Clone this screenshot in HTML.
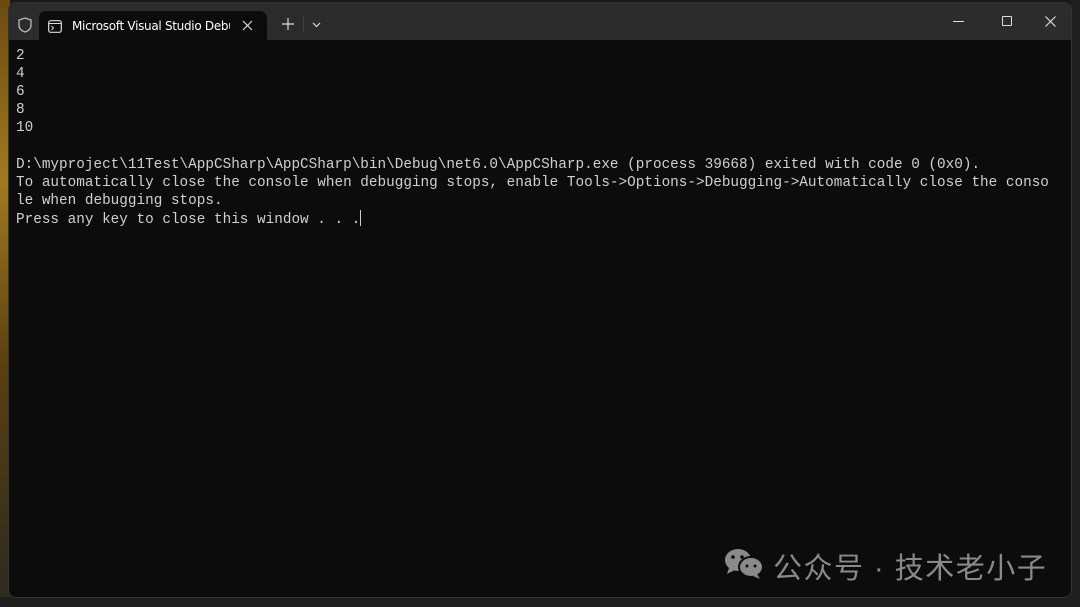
<!DOCTYPE html>
<html><head><meta charset="utf-8"><style>
html,body{margin:0;padding:0;width:1080px;height:607px;overflow:hidden;background:#1a1a14;}
.wp{position:absolute;left:0;top:0;width:10px;height:607px;background:linear-gradient(180deg,#6b4a12,#a07a20 30%,#5a4010 60%,#2a2a20);}
.ed{position:absolute;right:0;top:0;width:10px;height:607px;background:#1e1e1e;}
.bot{position:absolute;left:0;bottom:0;width:1080px;height:10px;background:#1e1e1e;}
.win{position:absolute;left:8px;top:2px;width:1064px;height:596px;background:#0c0c0c;border-radius:8px;overflow:hidden;border:1px solid #333;box-sizing:border-box;}
.tb{position:absolute;left:0;top:0;width:100%;height:37px;background:#2c2c2c;}
.tab{position:absolute;left:30px;top:8px;width:228px;height:30px;background:#0c0c0c;border-radius:7px 7px 0 0;}
.tab .t{position:absolute;left:33px;top:8px;font:12px "DejaVu Sans","Liberation Sans",sans-serif;color:#fff;width:158px;overflow:hidden;white-space:nowrap;letter-spacing:-0.3px;}
.con{position:absolute;left:7px;top:44px;font-family:"Liberation Mono",monospace;font-size:14.35px;line-height:18.1px;color:#d0d0d0;white-space:pre;}
.wm{position:absolute;top:545px;font:29px "Liberation Sans","Noto Sans CJK SC",sans-serif;color:#8a8a8a;letter-spacing:1.5px;}
</style></head><body>
<div class="wp"></div><div class="ed"></div><div class="bot"></div>
<div class="win">
<div class="tb">
<svg style="position:absolute;left:9px;top:14px" width="14" height="16" viewBox="0 0 14 16"><path d="M7 1 L13 3 V8 C13 12 10 14 7 15 C4 14 1 12 1 8 V3 Z" fill="none" stroke="#bbb" stroke-width="1.3"/></svg>
<div class="tab">
<svg style="position:absolute;left:9px;top:9px" width="14" height="13" viewBox="0 0 14 13"><rect x="0.7" y="0.7" width="12.6" height="11.6" rx="2" fill="none" stroke="#ddd" stroke-width="1.2"/><line x1="1" y1="3.5" x2="13" y2="3.5" stroke="#ddd"/><path d="M3.5 6 L5.5 8 L3.5 10" fill="none" stroke="#ddd"/></svg>
<div class="t">Microsoft Visual Studio Debug Console</div>
<svg style="position:absolute;left:203px;top:9px" width="11" height="11" viewBox="0 0 11 11"><path d="M1 1L10 10M10 1L1 10" stroke="#ddd" stroke-width="1.2"/></svg>
</div>
<svg style="position:absolute;left:273px;top:15px" width="12" height="12" viewBox="0 0 12 12"><path d="M6 0V12M0 6H12" stroke="#ddd" stroke-width="1.2"/></svg>
<div style="position:absolute;left:294px;top:12px;width:1px;height:18px;background:#444"></div>
<svg style="position:absolute;left:303px;top:19px" width="9" height="6" viewBox="0 0 9 6"><path d="M1 1L4.5 4.5L8 1" fill="none" stroke="#ddd" stroke-width="1.2"/></svg>
<div style="position:absolute;left:944px;top:18px;width:11px;height:1px;background:#ddd"></div>
<div style="position:absolute;left:993px;top:13px;width:8px;height:8px;border:1.2px solid #ddd;border-radius:1px"></div>
<svg style="position:absolute;left:1036px;top:13px" width="11" height="11" viewBox="0 0 11 11"><path d="M0.5 0.5L10.5 10.5M10.5 0.5L0.5 10.5" stroke="#ddd" stroke-width="1.2"/></svg>
</div>
<div class="con">2
4
6
8
10

D:\myproject\11Test\AppCSharp\AppCSharp\bin\Debug\net6.0\AppCSharp.exe (process 39668) exited with code 0 (0x0).
To automatically close the console when debugging stops, enable Tools-&gt;Options-&gt;Debugging-&gt;Automatically close the conso
le when debugging stops.
Press any key to close this window . . .<span style="display:inline-block;width:1px;height:16px;background:#ccc;vertical-align:-3px"></span></div>
</div>
<svg style="position:absolute;left:723px;top:546px" width="42" height="34" viewBox="0 0 42 34"><ellipse cx="15" cy="14" rx="13" ry="11" fill="#8a8a8a"/><path d="M6 22 L4 28 L12 24Z" fill="#8a8a8a"/><ellipse cx="28" cy="21" rx="12" ry="10" fill="#8a8a8a" stroke="#0c0c0c" stroke-width="2"/><path d="M34 28 L37 33 L30 30Z" fill="#8a8a8a"/><circle cx="10" cy="11" r="1.8" fill="#0c0c0c"/><circle cx="19" cy="11" r="1.8" fill="#0c0c0c"/><circle cx="24" cy="20" r="1.5" fill="#0c0c0c"/><circle cx="32" cy="20" r="1.5" fill="#0c0c0c"/></svg>
<div class="wm" style="left:773px">公众号 · 技术老小子</div>
</body></html>
